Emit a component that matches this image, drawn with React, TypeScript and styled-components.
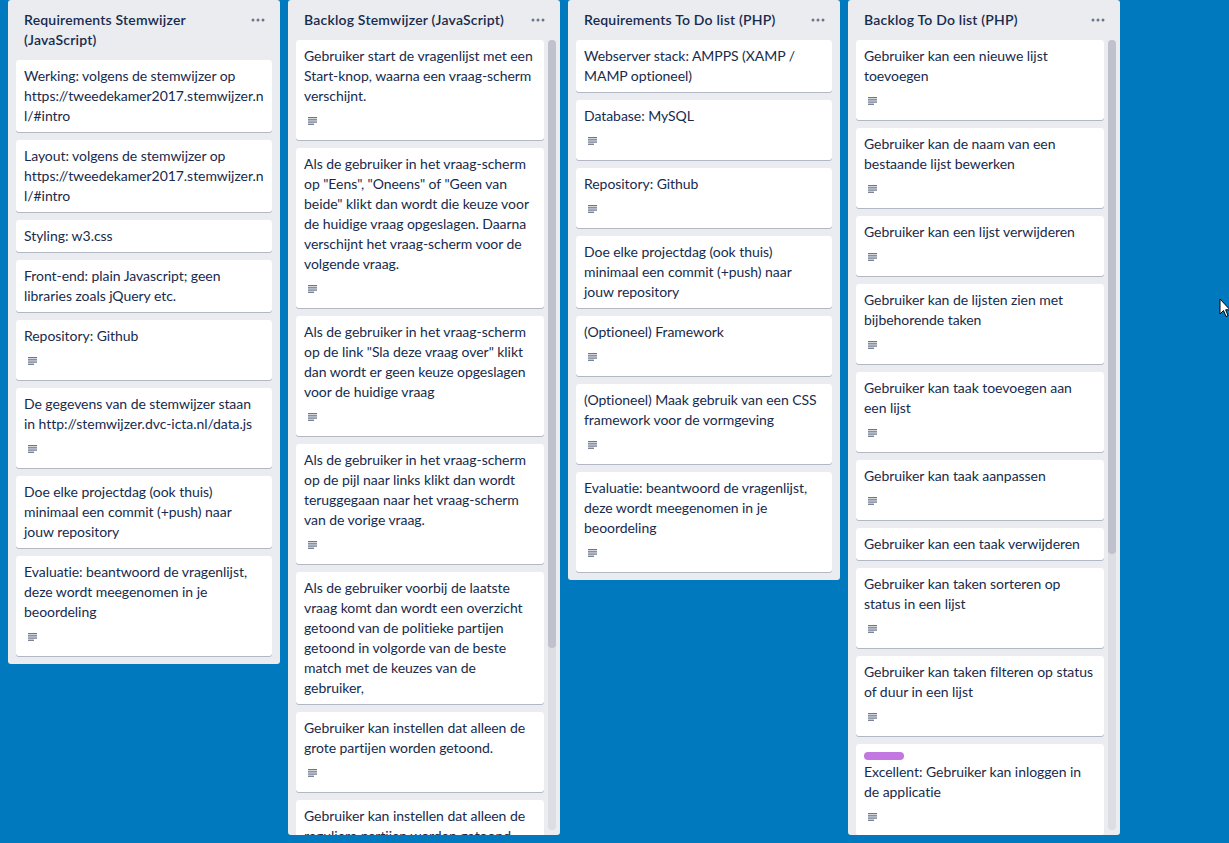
import React from "react";
import styled, { createGlobalStyle } from "styled-components";

const Global = createGlobalStyle`
  html, body { margin: 0; padding: 0; height: 100%; }
  body { background: #0079bf; font-family: "Segoe UI", Lato, "Noto Sans", sans-serif; overflow: hidden; }
  #root { height: 100%; }
`;

const Board = styled.div`
  position: relative;
  height: 843px;
  box-sizing: border-box;
  padding: 0 8px 8px 8px;
  display: flex;
  align-items: flex-start;
  gap: 8px;
  background: #0079bf;
`;

const Column = styled.div`
  width: 272px;
  flex: 0 0 272px;
  max-height: 835px;
  background: #ebecf0;
  border-radius: 3px;
  display: flex;
  flex-direction: column;
  overflow: hidden;
  box-sizing: border-box;
`;

const Header = styled.div`
  display: flex;
  align-items: flex-start;
  justify-content: space-between;
  padding: 10px 8px 0 16px;
  min-height: 40px;
  box-sizing: border-box;
`;

const Title = styled.h2`
  margin: 0;
  font-size: 14px;
  line-height: 20px;
  font-weight: 600;
  letter-spacing: 0.2px;
  color: #172b4d;
  padding-bottom: 10px;
  max-width: 220px;
`;

const MenuDots = styled.svg`
  width: 16px;
  height: 6px;
  margin: 7px 6px 0 0;
  flex: 0 0 auto;
`;

const ListWrap = styled.div<{ $scroll?: boolean }>`
  flex: 1 1 auto;
  min-height: 0;
  display: flex;
  gap: 4px;
  padding: 0 ${(p) => (p.$scroll ? "4px" : "8px")} 0 8px;
`;

const CardList = styled.div`
  flex: 1 1 auto;
  min-width: 0;
  display: flex;
  flex-direction: column;
  gap: 8px;
  padding-bottom: 8px;
  overflow: hidden;
`;

const ScrollTrack = styled.div`
  flex: 0 0 8px;
  width: 8px;
  margin-bottom: 5px;
  border-radius: 4px;
  background: #dcdee4;
  display: flex;
  flex-direction: column;
`;

const ScrollThumb = styled.div<{ $size: number }>`
  height: ${(p) => p.$size}%;
  border-radius: 4px;
  background: #bfc2cc;
`;

const Card = styled.div`
  flex: 0 0 auto;
  background: #fff;
  border-radius: 3px;
  box-shadow: 0 1px 0 rgba(9, 30, 66, 0.25);
  padding: 6px 8px 2px;
  color: #172b4d;
  font-size: 14px;
  line-height: 20px;
`;

const CardText = styled.div`
  margin-bottom: 4px;
  letter-spacing: -0.05px;
  overflow-wrap: anywhere;
`;

const Badges = styled.div`
  height: 28px;
  display: flex;
  align-items: flex-start;
`;

const DescIcon = styled.svg`
  width: 9px;
  height: 8px;
  margin: 7px 0 0 4px;
`;

const Label = styled.span<{ $color: string }>`
  display: block;
  width: 40px;
  height: 8px;
  border-radius: 4px;
  background: ${(p) => p.$color};
  margin: 2px 0 2px;
`;

const Cursor = styled.svg`
  position: absolute;
  left: 1219px;
  top: 298px;
  width: 12px;
  height: 20px;
`;

type CardData = { text: string; desc?: boolean; label?: string };
type ColumnData = { title: string; thumb?: number; cards: CardData[] };

const columns: ColumnData[] = [
  {
    title: "Requirements Stemwijzer (JavaScript)",
    cards: [
      { text: "Werking: volgens de stemwijzer op https://tweedekamer2017.stemwijzer.nl/#intro" },
      { text: "Layout: volgens de stemwijzer op https://tweedekamer2017.stemwijzer.nl/#intro" },
      { text: "Styling: w3.css" },
      { text: "Front-end: plain Javascript; geen libraries zoals jQuery etc." },
      { text: "Repository: Github", desc: true },
      { text: "De gegevens van de stemwijzer staan in http://stemwijzer.dvc-icta.nl/data.js", desc: true },
      { text: "Doe elke projectdag (ook thuis) minimaal een commit (+push) naar jouw repository" },
      { text: "Evaluatie: beantwoord de vragenlijst, deze wordt meegenomen in je beoordeling", desc: true },
    ],
  },
  {
    title: "Backlog Stemwijzer (JavaScript)",
    thumb: 77,
    cards: [
      { text: "Gebruiker start de vragenlijst met een Start-knop, waarna een vraag-scherm verschijnt.", desc: true },
      { text: "Als de gebruiker in het vraag-scherm op \"Eens\", \"Oneens\" of \"Geen van beide\" klikt dan wordt die keuze voor de huidige vraag opgeslagen. Daarna verschijnt het vraag-scherm voor de volgende vraag.", desc: true },
      { text: "Als de gebruiker in het vraag-scherm op de link \"Sla deze vraag over\" klikt dan wordt er geen keuze opgeslagen voor de huidige vraag", desc: true },
      { text: "Als de gebruiker in het vraag-scherm op de pijl naar links klikt dan wordt teruggegaan naar het vraag-scherm van de vorige vraag.", desc: true },
      { text: "Als de gebruiker voorbij de laatste vraag komt dan wordt een overzicht getoond van de politieke partijen getoond in volgorde van de beste match met de keuzes van de gebruiker," },
      { text: "Gebruiker kan instellen dat alleen de grote partijen worden getoond.", desc: true },
      { text: "Gebruiker kan instellen dat alleen de reguliere partijen worden getoond.", desc: true },
      { text: "Gebruiker kan kiezen welke stellingen extra zwaar meetellen.", desc: true },
    ],
  },
  {
    title: "Requirements To Do list (PHP)",
    cards: [
      { text: "Webserver stack: AMPPS (XAMP / MAMP optioneel)" },
      { text: "Database: MySQL", desc: true },
      { text: "Repository: Github", desc: true },
      { text: "Doe elke projectdag (ook thuis) minimaal een commit (+push) naar jouw repository" },
      { text: "(Optioneel) Framework", desc: true },
      { text: "(Optioneel) Maak gebruik van een CSS framework voor de vormgeving", desc: true },
      { text: "Evaluatie: beantwoord de vragenlijst, deze wordt meegenomen in je beoordeling", desc: true },
    ],
  },
  {
    title: "Backlog To Do list (PHP)",
    thumb: 65,
    cards: [
      { text: "Gebruiker kan een nieuwe lijst toevoegen", desc: true },
      { text: "Gebruiker kan de naam van een bestaande lijst bewerken", desc: true },
      { text: "Gebruiker kan een lijst verwijderen", desc: true },
      { text: "Gebruiker kan de lijsten zien met bijbehorende taken", desc: true },
      { text: "Gebruiker kan taak toevoegen aan een lijst", desc: true },
      { text: "Gebruiker kan taak aanpassen", desc: true },
      { text: "Gebruiker kan een taak verwijderen" },
      { text: "Gebruiker kan taken sorteren op status in een lijst", desc: true },
      { text: "Gebruiker kan taken filteren op status of duur in een lijst", desc: true },
      { text: "Excellent: Gebruiker kan inloggen in de applicatie", desc: true, label: "#c377e0" },
      { text: "Excellent: Gebruiker kan taken delen met andere gebruikers", desc: true, label: "#c377e0" },
      { text: "Excellent: Gebruiker kan een deadline instellen voor een taak", desc: true, label: "#c377e0" },
    ],
  },
];

function Dots() {
  return (
    <MenuDots viewBox="0 0 16 6">
      <circle cx="3" cy="3" r="1.5" fill="#6b778c" />
      <circle cx="8" cy="3" r="1.5" fill="#6b778c" />
      <circle cx="13" cy="3" r="1.5" fill="#6b778c" />
    </MenuDots>
  );
}

function Desc() {
  return (
    <DescIcon viewBox="0 0 9 8">
      <rect x="0" y="0" width="9" height="1.3" fill="#6b778c" />
      <rect x="0" y="2.2" width="9" height="1.3" fill="#6b778c" />
      <rect x="0" y="4.4" width="9" height="1.3" fill="#6b778c" />
      <rect x="0" y="6.6" width="6" height="1.3" fill="#6b778c" />
    </DescIcon>
  );
}

export default function App() {
  return (
    <>
      <Global />
      <Board>
        {columns.map((col) => (
          <Column key={col.title}>
            <Header>
              <Title>{col.title}</Title>
              <Dots />
            </Header>
            <ListWrap $scroll={!!col.thumb}>
              <CardList>
                {col.cards.map((c, i) => (
                  <Card key={i}>
                    {c.label && <Label $color={c.label} />}
                    <CardText>{c.text}</CardText>
                    {c.desc && (
                      <Badges>
                        <Desc />
                      </Badges>
                    )}
                  </Card>
                ))}
              </CardList>
              {col.thumb && (
                <ScrollTrack>
                  <ScrollThumb $size={col.thumb} />
                </ScrollTrack>
              )}
            </ListWrap>
          </Column>
        ))}
        <Cursor viewBox="0 0 12 20">
          <path d="M1 1 L1 16 L4.5 12.5 L7 18.5 L9 17.6 L6.6 11.8 L11 11.8 Z" fill="#fff" stroke="#000" strokeWidth="1" strokeLinejoin="round" />
        </Cursor>
      </Board>
    </>
  );
}
